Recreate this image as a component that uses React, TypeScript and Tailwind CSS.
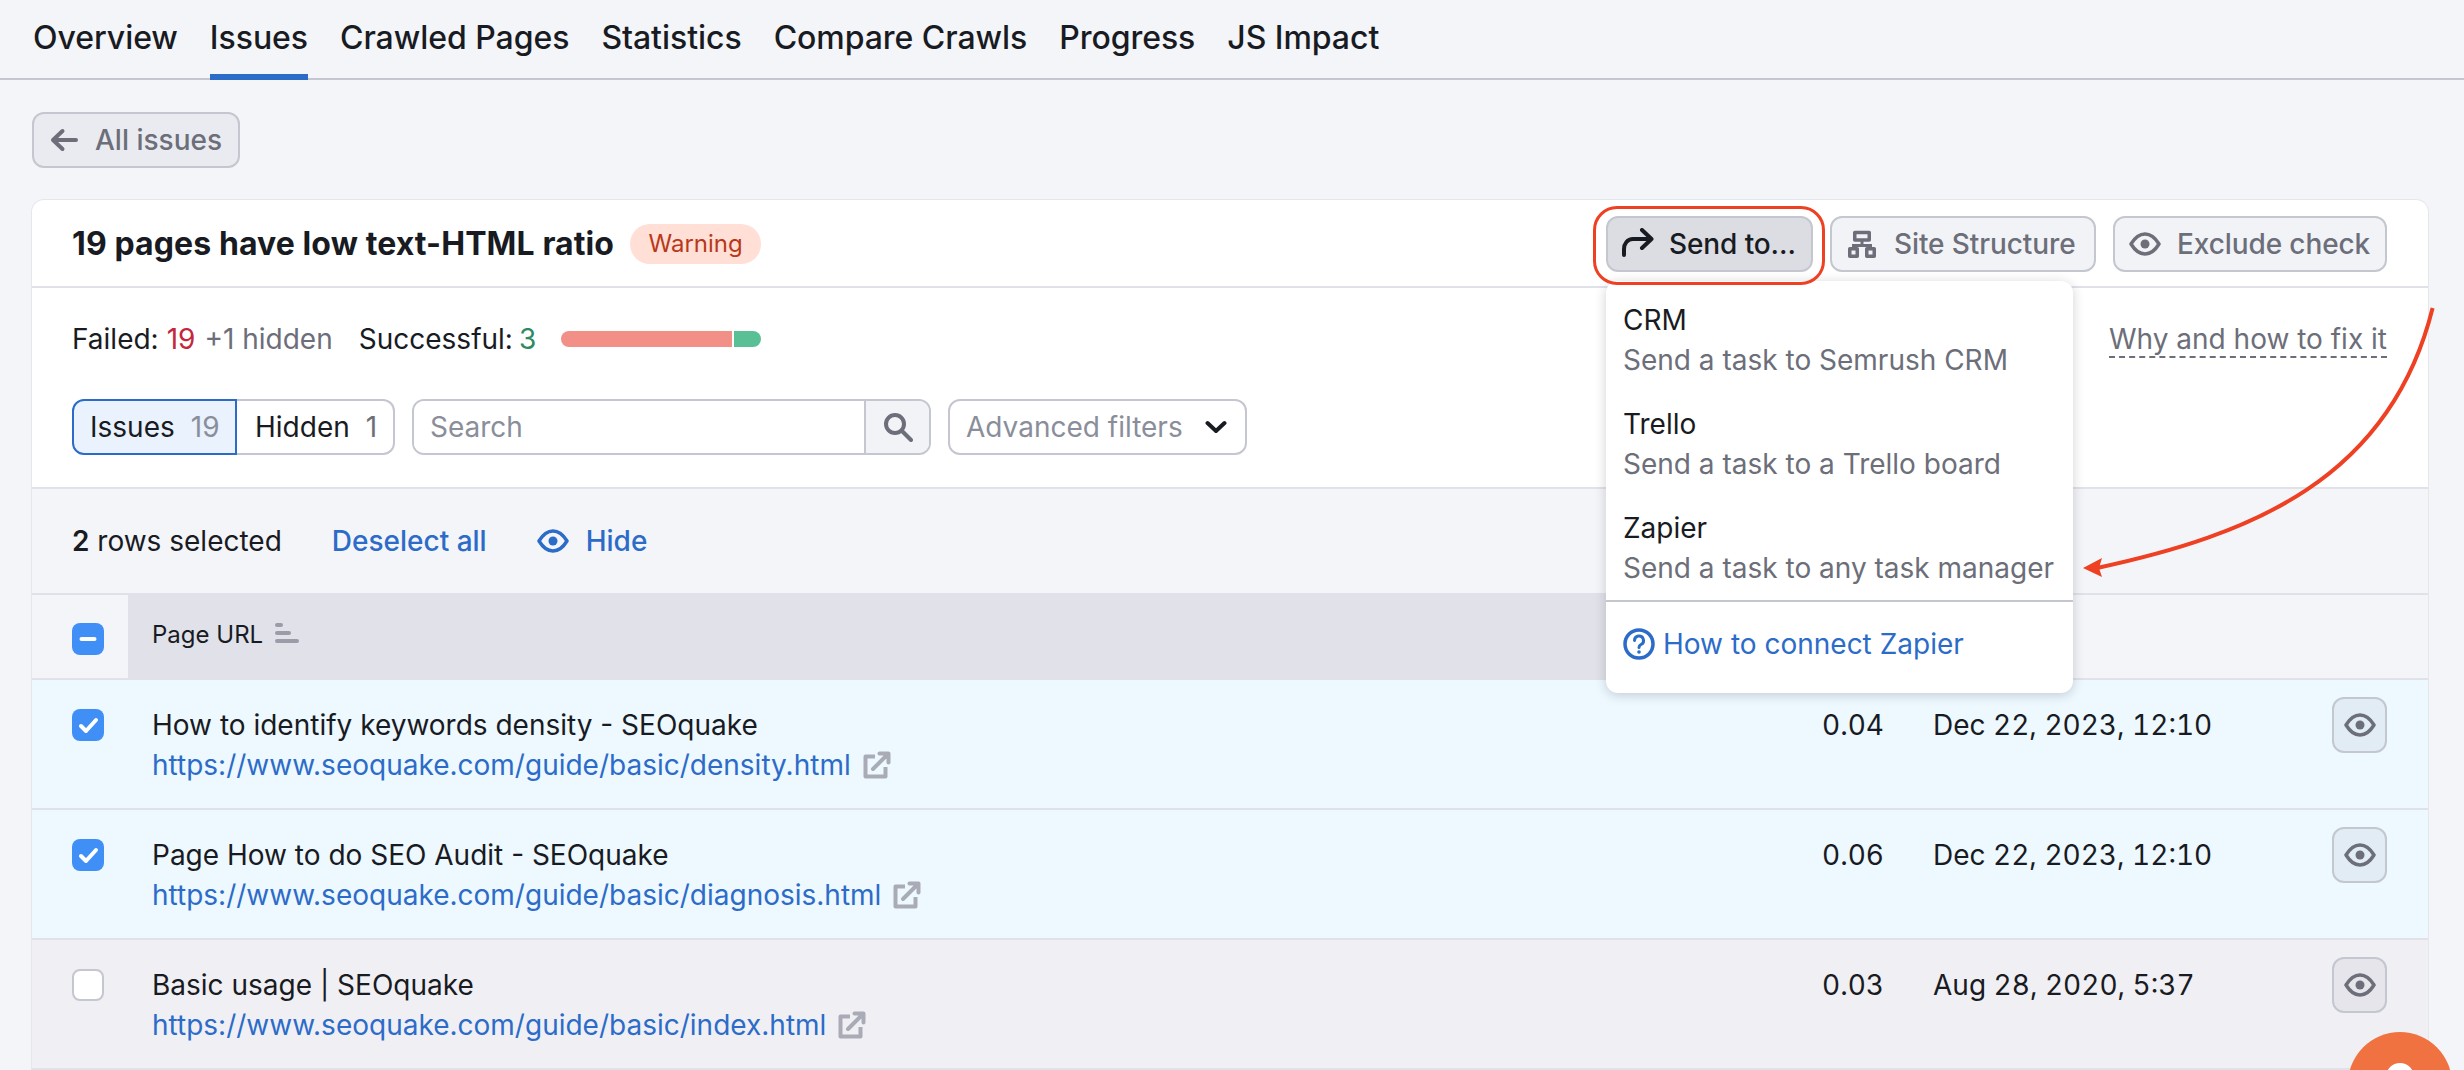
import { ReactNode } from 'react';

const tabs = ['Overview', 'Issues', 'Crawled Pages', 'Statistics', 'Compare Crawls', 'Progress', 'JS Impact'];

const rows = [
  {
    title: 'How to identify keywords density - SEOquake',
    url: 'https://www.seoquake.com/guide/basic/density.html',
    ratio: '0.04',
    date: 'Dec 22, 2023, 12:10',
    selected: true,
  },
  {
    title: 'Page How to do SEO Audit - SEOquake',
    url: 'https://www.seoquake.com/guide/basic/diagnosis.html',
    ratio: '0.06',
    date: 'Dec 22, 2023, 12:10',
    selected: true,
  },
  {
    title: 'Basic usage | SEOquake',
    url: 'https://www.seoquake.com/guide/basic/index.html',
    ratio: '0.03',
    date: 'Aug 28, 2020, 5:37',
    selected: false,
  },
];

const menuItems = [
  { name: 'CRM', text: 'Send a task to Semrush CRM' },
  { name: 'Trello', text: 'Send a task to a Trello board' },
  { name: 'Zapier', text: 'Send a task to any task manager' },
];

function EyeIcon({ className }: { className?: string }) {
  return (
    <svg viewBox="0 0 32 24" fill="none" className={className}>
      <path
        d="M2 12C6 5.500 10.500 2 16 2s10 3.500 14 10c-4 6.500-8.500 10-14 10S6 18.500 2 12Z"
        stroke="currentColor"
        strokeWidth="3.500"
        strokeLinejoin="round"
      />
      <circle cx="16" cy="12" r="4.500" fill="currentColor" />
    </svg>
  );
}

function ExternalIcon() {
  return (
    <svg viewBox="0 0 28 28" fill="none" className="h-[28px] w-[28px] shrink-0 text-[#a9abb6]">
      <path d="M12 5.500H2.500v20h20V16" stroke="currentColor" strokeWidth="4" strokeLinejoin="round" />
      <path d="M10 18 24 4M16.500 2.500h9v9" stroke="currentColor" strokeWidth="4" strokeLinecap="round" strokeLinejoin="round" />
    </svg>
  );
}

function Checkbox({ state }: { state: 'on' | 'off' | 'mixed' }) {
  if (state === 'off') {
    return <div className="h-[32px] w-[32px] shrink-0 rounded-[8px] border-2 border-[#c4c7cf] bg-white" />;
  }
  return (
    <div className="flex h-[32px] w-[32px] shrink-0 items-center justify-center rounded-[8px] bg-[#3f8ff7]">
      <svg viewBox="0 0 32 32" fill="none" className="h-[32px] w-[32px]">
        {state === 'on' ? (
          <path d="M9 17l5 5 10-11" stroke="white" strokeWidth="4" strokeLinecap="round" strokeLinejoin="round" />
        ) : (
          <path d="M9.500 16h13" stroke="white" strokeWidth="4" strokeLinecap="round" />
        )}
      </svg>
    </div>
  );
}

function GhostButton({ icon, label, width }: { icon: ReactNode; label: string; width: string }) {
  return (
    <button className={`flex h-[56px] ${width} items-center gap-[16px] rounded-[12px] border-2 border-[#c4c7cf] bg-[#f2f3f7] pl-[14px] text-[28px] font-medium tracking-[-0.1px] text-[#6c6e79]`}>
      <span className="flex w-[32px] shrink-0 justify-center">{icon}</span>
      {label}
    </button>
  );
}

function SendMenu() {
  return (
    <div className="absolute left-0 top-[65px] z-10 h-[412px] w-[467px] rounded-[12px] bg-white shadow-[0_2px_12px_rgba(25,27,35,0.2)]">
      <div className="flex flex-col gap-[24px] px-[17px] pt-[19px]">
        {menuItems.map((item) => (
          <div key={item.name} className="text-[28px] leading-[40px]">
            <div className="text-[#191b23]">{item.name}</div>
            <div className="whitespace-nowrap text-[#6c6e79]">{item.text}</div>
          </div>
        ))}
      </div>
      <div className="mt-[12px] border-t-2 border-[#c4c7cf] px-[17px] pt-[24px]">
        <div className="flex items-center gap-[8px] text-[28px] leading-[36px] text-[#2c6cc8]">
          <svg viewBox="0 0 32 32" fill="none" className="h-[32px] w-[32px] shrink-0">
            <circle cx="16" cy="16" r="14" stroke="currentColor" strokeWidth="3.500" />
            <path d="M11.500 12.500a4.500 4.500 0 1 1 6.500 4c-1.500.8-2 1.500-2 3" stroke="currentColor" strokeWidth="3" strokeLinecap="round" />
            <circle cx="16" cy="24" r="1.800" fill="currentColor" />
          </svg>
          How to connect Zapier
        </div>
      </div>
    </div>
  );
}

export default function App() {
  return (
    <div className="relative h-[1070px] w-[2464px] overflow-hidden bg-[#f4f5f9] font-['Inter',sans-serif] text-[#191b23]">
      <nav className="flex h-[80px] gap-[32px] border-b-2 border-[#c4c7cf] pl-[33px] tracking-[-0.05px]">
        {tabs.map((tab) => (
          <div
            key={tab}
            className={
              tab === 'Issues'
                ? 'h-[80px] border-b-[6px] border-[#2c6cc8] pt-[18px] text-[32px] font-medium leading-[40px]'
                : 'h-[78px] pt-[18px] text-[32px] font-medium leading-[40px]'
            }
          >
            {tab}
          </div>
        ))}
      </nav>

      <div className="pl-[32px] pt-[32px]">
        <button className="flex h-[56px] w-[208px] items-center gap-[17px] rounded-[12px] border-2 border-[#c4c7cf] bg-[#eaebf0] pl-[16px] text-[28px] font-medium text-[#6c6e79]">
          <svg viewBox="0 0 28 24" fill="none" className="h-[24px] w-[28px]">
            <path d="M26 12H4M12.500 3 3 12l9.500 9" stroke="currentColor" strokeWidth="4" strokeLinecap="round" strokeLinejoin="round" />
          </svg>
          All issues
        </button>
      </div>

      <main className="ml-[32px] mt-[32px] w-[2396px] rounded-t-[12px] bg-white ring-1 ring-[#e6e7ed]">
        <header className="flex h-[88px] items-center border-b-2 border-[#e0e1e9] pl-[40px] pr-[41px] pt-[2px]">
          <h1 className="text-[32px] font-bold leading-[40px] tracking-[0.1px]">19 pages have low text-HTML ratio</h1>
          <span className="ml-[16px] flex h-[40px] w-[131px] items-center justify-center rounded-[20px] bg-[#ffdfd6] text-[24px] text-[#b8391a]">
            Warning
          </span>
          <div className="ml-auto flex gap-[17px]">
            <div className="relative">
              <button className="flex h-[56px] w-[207px] items-center gap-[15px] rounded-[12px] border-2 border-[#c4c7cf] bg-[#dbdde2] pl-[14px] text-[28px] font-medium tracking-[-0.1px] text-[#191b23]">
                <svg viewBox="0 0 32 32" fill="none" className="h-[32px] w-[32px] shrink-0">
                  <path d="M2 27v-6c0-5.500 3.500-10 9-10h18.500M20 2l9.500 9-9.500 9" stroke="currentColor" strokeWidth="4" strokeLinecap="round" strokeLinejoin="round" />
                </svg>
                Send to...
              </button>
              <div className="absolute -bottom-[13px] -left-[13px] -right-[12px] -top-[10px] z-20 rounded-[24px] border-[3px] border-[#ee4023]" />
              <SendMenu />
            </div>
            <GhostButton
              label="Site Structure"
              width="w-[266px]"
              icon={
                <svg viewBox="0 0 28 28" fill="none" className="h-[28px] w-[28px] shrink-0">
                  <path d="M6.750 2.500h14.500V10H6.750zM1.750 18.750h7.500v7.500h-7.500zM18.750 18.750h7.500v7.500h-7.500z" stroke="currentColor" strokeWidth="3.500" strokeLinejoin="round" />
                  <path d="M14 10v5M5.500 18v-2.500h17V18" stroke="currentColor" strokeWidth="3" />
                </svg>
              }
            />
            <GhostButton label="Exclude check" width="w-[274px]" icon={<EyeIcon className="h-[24px] w-[32px] shrink-0" />} />
          </div>
        </header>

        <section className="h-[201px] border-b-2 border-[#e0e1e9] pl-[40px] pr-[41px] pt-[34px]">
          <div className="flex items-start text-[28px] leading-[34px]">
            <span>Failed:</span>
            <span className="ml-[8px] text-[#c4273b]">19</span>
            <span className="ml-[9px] text-[#6c6e79]">+1 hidden</span>
            <span className="ml-[26px]">Successful:</span>
            <span className="ml-[6px] text-[#2e8a63]">3</span>
            <div className="ml-[25px] mt-[9px] flex h-[16px] w-[200px] gap-[2px] overflow-hidden rounded-[8px]">
              <div className="w-[171px] bg-[#f28f87]" />
              <div className="flex-1 bg-[#59c096]" />
            </div>
            <span className="ml-auto border-b-2 border-dashed border-[#6c6e79] text-[#6c6e79]">Why and how to fix it</span>
          </div>

          <div className="mt-[41px] flex h-[56px] text-[28px]">
            <div className="flex h-full w-[165px] items-center gap-[16px] rounded-l-[12px] border-2 border-[#2c6cc8] bg-[#e9f2fd] pl-[16px]">
              <span>Issues</span>
              <span className="text-[#8a8e9b]">19</span>
            </div>
            <div className="flex h-full w-[158px] items-center gap-[16px] rounded-r-[12px] border-2 border-l-0 border-[#c4c7cf] pl-[18px]">
              <span>Hidden</span>
              <span className="text-[#6c6e79]">1</span>
            </div>
            <div className="ml-[17px] flex h-full w-[519px] overflow-hidden rounded-[12px] border-2 border-[#c4c7cf]">
              <input
                placeholder="Search"
                className="min-w-0 flex-1 bg-white pl-[16px] text-[28px] outline-none placeholder:text-[#8a8e9b]"
              />
              <div className="flex w-[65px] items-center justify-center border-l-2 border-[#c4c7cf] bg-[#f2f3f7]">
                <svg viewBox="0 0 30 30" fill="none" className="h-[30px] w-[30px] text-[#6c6e79]">
                  <circle cx="12" cy="12" r="9" stroke="currentColor" strokeWidth="4" />
                  <path d="M19 19l9 9" stroke="currentColor" strokeWidth="4" strokeLinecap="round" />
                </svg>
              </div>
            </div>
            <div className="ml-[17px] flex h-full w-[299px] items-center rounded-[12px] border-2 border-[#c4c7cf] pl-[16px] text-[#8a8e9b]">
              Advanced filters
              <svg viewBox="0 0 22 14" fill="none" className="ml-[22px] h-[14px] w-[22px] text-[#191b23]">
                <path d="M2.500 3 11 11l8.500-8" stroke="currentColor" strokeWidth="4" strokeLinecap="round" strokeLinejoin="round" />
              </svg>
            </div>
          </div>
        </section>

        <div className="flex h-[104px] items-center bg-[#f4f5f9] pl-[40px] text-[28px]">
          <span>
            <b className="font-semibold">2</b> rows selected
          </span>
          <span className="ml-[50px] font-medium text-[#2c6cc8]">Deselect all</span>
          <span className="ml-[50px] flex items-center gap-[17px] font-medium text-[#2c6cc8]">
            <EyeIcon className="h-[24px] w-[32px]" />
            Hide
          </span>
        </div>

        <div className="flex h-[87px] border-t-2 border-[#e0e1e9] bg-[#f4f5f9]">
          <div className="flex w-[96px] items-start border-b-2 border-[#e0e1e9] pl-[40px] pt-[28px]">
            <Checkbox state="mixed" />
          </div>
          <div className="flex w-[1600px] items-start gap-[12px] bg-[#e0e1e9] pl-[24px] pt-[22px] text-[24px] leading-[36px]">
            Page URL
            <svg viewBox="0 0 24 20" fill="none" className="mt-[6px] h-[20px] w-[24px] text-[#9a9ca8]">
              <path d="M2 2h4M2 10h12M2 18h20" stroke="currentColor" strokeWidth="4" strokeLinecap="round" />
            </svg>
          </div>
          <div className="flex-1 border-b-2 border-[#e0e1e9]" />
        </div>

        {rows.map((row) => (
          <div
            key={row.url}
            className={
              row.selected
                ? 'flex h-[130px] items-start border-b-2 border-[#e0e1e9] bg-[#edf8ff] pl-[40px] text-[28px] leading-[40px]'
                : 'flex h-[130px] items-start border-b-2 border-[#e0e1e9] bg-[#f0f0f4] pl-[40px] text-[28px] leading-[40px]'
            }
          >
            <div className="pt-[29px]">
              <Checkbox state={row.selected ? 'on' : 'off'} />
            </div>
            <div className="ml-[48px] flex-1 pt-[25px]">
              <div>{row.title}</div>
              <div className="flex items-center gap-[12px] text-[#2c6cc8]">
                {row.url}
                <ExternalIcon />
              </div>
            </div>
            <div className="w-[111px] pt-[25px] tabular-nums">{row.ratio}</div>
            <div className="w-[399px] pt-[25px] tabular-nums">{row.date}</div>
            <button className="mr-[41px] mt-[17px] flex h-[56px] w-[55px] items-center justify-center rounded-[12px] border-2 border-[#c4c7cf] bg-[#8a8e9b1a] text-[#6c6e79]">
              <EyeIcon className="h-[24px] w-[32px]" />
            </button>
          </div>
        ))}
      </main>

      <svg viewBox="0 0 380 290" fill="none" className="absolute left-[2070px] top-[300px] z-30 h-[290px] w-[380px]">
        <path d="M362.600 8C320 180 180 235 27 268" stroke="#ee4023" strokeWidth="4" />
        <path d="M13 268 32 258 29 268 32 277Z" fill="#ee4023" />
      </svg>

      <div className="absolute left-[2348px] top-[1032px] z-30 h-[104px] w-[104px] rounded-full bg-[#ef7240]">
        <svg viewBox="0 0 104 104" fill="none" className="h-[104px] w-[104px]">
          <path d="M42 45a10 10 0 0 1 20 0c0 8-10 10-10 18" stroke="white" strokeWidth="8" strokeLinecap="round" />
        </svg>
      </div>
    </div>
  );
}
